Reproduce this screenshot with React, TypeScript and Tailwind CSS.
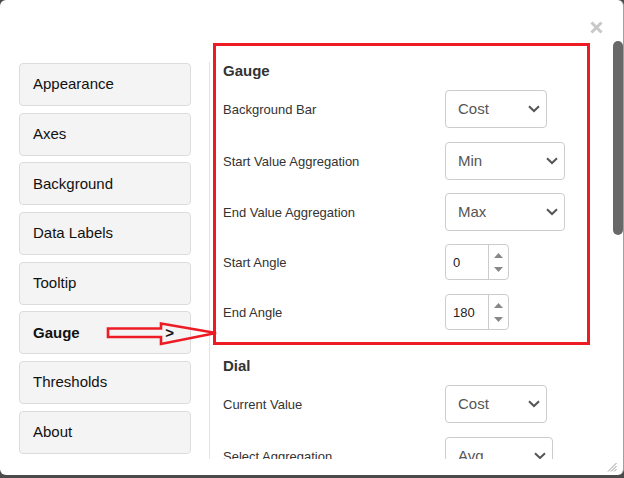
import React from 'react'

// Chart settings dialog — Gauge tab, with a red annotation box and arrow.

const navItems = [
  'Appearance',
  'Axes',
  'Background',
  'Data Labels',
  'Tooltip',
  'Gauge',
  'Thresholds',
  'About',
]

function Chevron() {
  return (
    <svg width="12" height="8" viewBox="0 0 12 8" className="shrink-0">
      <polyline points="1,1.2 6,6 11,1.2" fill="none" stroke="#555555" strokeWidth="2" />
    </svg>
  )
}

function FakeSelect({ value, width }: { value: string; width: string }) {
  return (
    <div
      className={`${width} h-[38px] border border-[#cccccc] rounded-[4px] bg-white flex items-center justify-between pl-[12px] pr-[6px] text-[15px] text-[#555555]`}
    >
      <span className="pt-[1px]">{value}</span>
      <Chevron />
    </div>
  )
}

function NumberBox({ value }: { value: string }) {
  return (
    <div className="w-[64px] h-[36px] border border-[#cccccc] rounded-[4px] bg-white flex">
      <div className="flex-1 flex items-center pl-[7px] pt-[1px] text-[13px] text-[#222222]">{value}</div>
      <div className="w-[20px] border-l border-[#cccccc] flex flex-col items-center justify-around py-[3px]">
        <svg width="9" height="5" viewBox="0 0 9 5">
          <polygon points="0,5 4.5,0 9,5" fill="#888888" />
        </svg>
        <svg width="9" height="5" viewBox="0 0 9 5">
          <polygon points="0,0 9,0 4.5,5" fill="#888888" />
        </svg>
      </div>
    </div>
  )
}

function Row({ label, children, className = '' }: { label: string; children: React.ReactNode; className?: string }) {
  return (
    <div className={`flex items-center ${className}`}>
      <div className="w-[222px] pt-[2px] text-[13px] text-[#333333]">{label}</div>
      {children}
    </div>
  )
}

export default function App() {
  return (
    <div
      className="w-[624px] h-[478px] bg-[#4b4b4b] overflow-hidden"
      style={{ fontFamily: '"Liberation Sans", Arial, sans-serif' }}
    >
      <div className="relative w-[624px] h-[475px] bg-white rounded-[6px] border-r border-[#a0a0a0] flex flex-col">
        {/* header with close */}
        <div className="h-[40px] flex justify-end pt-[21px] pr-[20px]">
          <svg width="13" height="13" viewBox="0 0 13 13">
            <line x1="1.5" y1="1.5" x2="11.5" y2="11.5" stroke="#c8c8c8" strokeWidth="3" />
            <line x1="11.5" y1="1.5" x2="1.5" y2="11.5" stroke="#c8c8c8" strokeWidth="3" />
          </svg>
        </div>

        {/* body */}
        <div className="flex h-[419px]">
          <nav className="w-[209px] shrink-0 pl-[19px] pt-[23px] flex flex-col gap-[6.7px]">
            {navItems.map(item => (
              <div
                key={item}
                className={`w-[172px] h-[43px] shrink-0 flex items-center justify-between pl-[13px] pr-[16px] border border-[#dcdcdc] rounded-[4px] bg-[#f4f4f4] text-[15px] text-[#111111] ${
                  item === 'Gauge' ? 'font-bold' : ''
                }`}
              >
                <span>{item}</span>
                {item === 'Gauge' && <span>&gt;</span>}
              </div>
            ))}
          </nav>

          <div className="flex-1 overflow-hidden">
            <div className="mt-[22px] border-l border-[#e3e3e3] pl-[13px] pb-[40px]">
              <h3 className="text-[15px] leading-[18px] font-bold text-[#333333]">Gauge</h3>
              <Row label="Background Bar" className="mt-[10px]">
                <FakeSelect value="Cost" width="w-[102px]" />
              </Row>
              <Row label="Start Value Aggregation" className="mt-[14px]">
                <FakeSelect value="Min" width="w-[120px]" />
              </Row>
              <Row label="End Value Aggregation" className="mt-[13px]">
                <FakeSelect value="Max" width="w-[120px]" />
              </Row>
              <Row label="Start Angle" className="mt-[13px]">
                <NumberBox value="0" />
              </Row>
              <Row label="End Angle" className="mt-[14px]">
                <NumberBox value="180" />
              </Row>

              <h3 className="mt-[27px] text-[15px] leading-[18px] font-bold text-[#333333]">Dial</h3>
              <Row label="Current Value" className="mt-[10px]">
                <FakeSelect value="Cost" width="w-[102px]" />
              </Row>
              <Row label="Select Aggregation" className="mt-[14px]">
                <FakeSelect value="Avg" width="w-[108px]" />
              </Row>
            </div>
          </div>

          {/* scrollbar */}
          <div className="w-[10px] shrink-0">
            <div className="mt-[1px] h-[194px] w-[10px] rounded-full bg-[#686868]" />
          </div>
        </div>

        {/* footer with resize grip */}
        <div className="flex-1 flex justify-end items-end pr-[6px] pb-[3px]">
          <svg width="10" height="10" viewBox="0 0 10 10">
            <line x1="9.5" y1="1" x2="1" y2="9.5" stroke="#9a9a9a" strokeWidth="1" />
            <line x1="9.5" y1="4" x2="4" y2="9.5" stroke="#9a9a9a" strokeWidth="1" />
            <line x1="9.5" y1="7" x2="7" y2="9.5" stroke="#9a9a9a" strokeWidth="1" />
          </svg>
        </div>

        {/* annotation: red box */}
        <div className="absolute left-[213px] top-[43px] w-[377px] h-[302px] border-[3px] border-[#ed1c24] pointer-events-none" />

        {/* annotation: red arrow */}
        <svg
          className="absolute left-[100px] top-[315px] pointer-events-none"
          width="122"
          height="36"
          viewBox="0 0 122 36"
        >
          <polygon
            points="8,13.5 61,13.5 61,8.5 116,18 61,29 61,22 8,22"
            fill="none"
            stroke="#ed1c24"
            strokeWidth="2.6"
          />
        </svg>
      </div>
    </div>
  )
}
